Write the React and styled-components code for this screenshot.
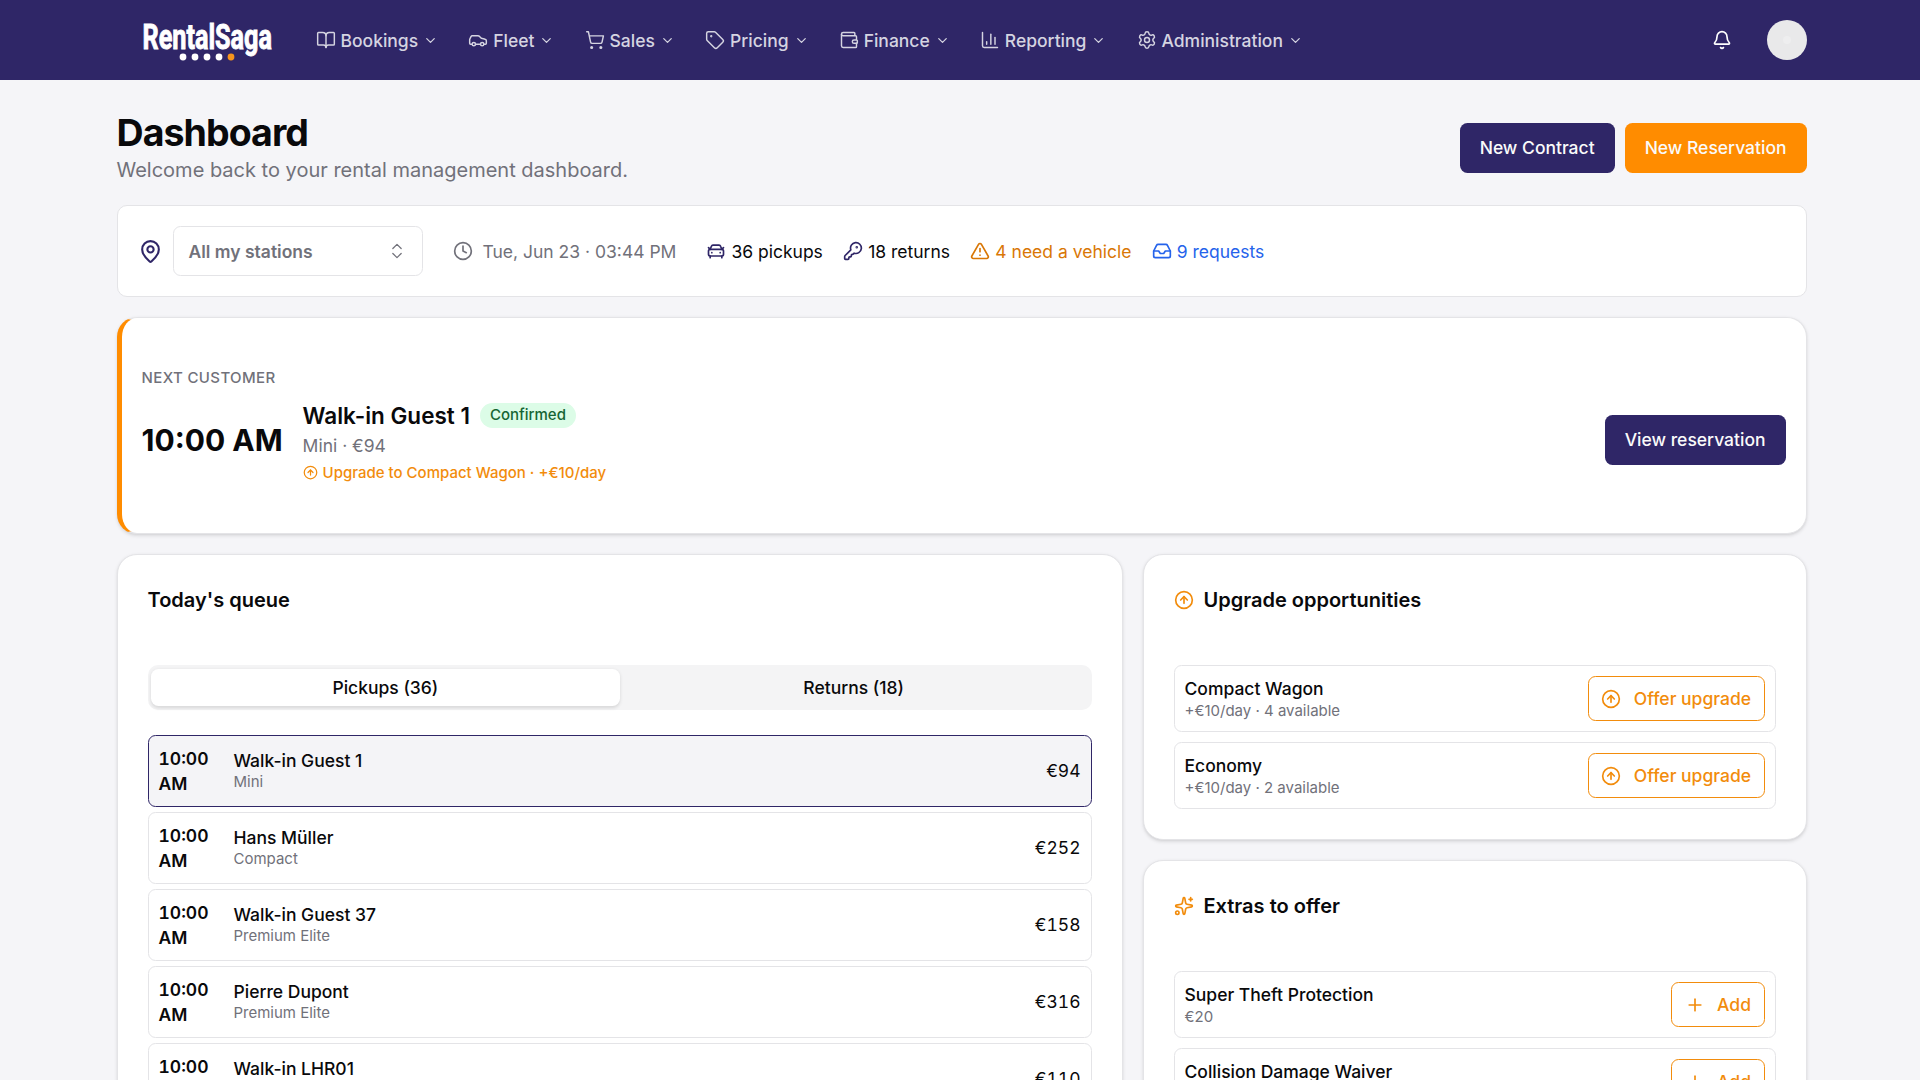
import React, { useState } from 'react'
import styled, { createGlobalStyle } from 'styled-components'
import {
  BookOpen, Car, ShoppingCart, Tag, Wallet, ChartColumn, Settings, ChevronDown, ChevronsUpDown,
  Bell, MapPin, Clock, CarFront, KeyRound, TriangleAlert, Inbox, CircleArrowUp, Sparkles, Plus
} from 'lucide-react'

const GlobalStyle = createGlobalStyle`
* {
  box-sizing: border-box;
  margin: 0;
  padding: 0;
}
body {
  background-color: #f5f5f8;
  color: #09090b;
  font-family: Inter, sans-serif;
  font-size: 17.5px;
  line-height: 25px;
}
button {
  font-family: inherit;
  cursor: pointer;
}
svg {
  flex-shrink: 0;
}
`

const Page = styled.div`
  height: 1080px;
  overflow: hidden;
`
const Header = styled.header`
  display: flex;
  align-items: center;
  height: 80px;
  padding: 0 113px 0 141.5px;
  background-color: #2f2667;
`
const Logo = styled.svg`
  width: 132px;
  height: 46px;
  margin-right: 42px;
  overflow: visible;
`
const Menu = styled.nav`
  display: flex;
  gap: 30.1px;
`
const MenuItem = styled.a`
  display: flex;
  align-items: center;
  gap: 5px;
  color: #d5d4e1;
  font-weight: 500;
`
const Account = styled.div`
  display: flex;
  align-items: center;
  gap: 35px;
  margin-left: auto;
  color: white;
`
const Avatar = styled.div`
  display: flex;
  align-items: center;
  justify-content: center;
  width: 40px;
  height: 40px;
  border-radius: 50%;
  background-color: #e9e9ea;
  &::after {
    content: '';
    width: 8px;
    height: 8px;
    border-radius: 50%;
    background-color: #eeeeef;
  }
`
const Main = styled.main`
  display: flex;
  flex-direction: column;
  gap: 20px;
  padding: 30px 113.5px 0 116.5px;
`
const Heading = styled.div`
  display: flex;
  align-items: center;
  justify-content: space-between;
`
const Title = styled.h1`
  font-size: 37.5px;
  line-height: 45px;
  font-weight: 700;
  letter-spacing: -0.025em;
`
const Welcome = styled.p`
  font-size: 20px;
  line-height: 30px;
  color: #71717a;
`
const Actions = styled.div`
  display: flex;
  gap: 10px;
`
const Button = styled.button`
  height: 50px;
  padding: 0 20px;
  border: none;
  border-radius: 7.5px;
  background-color: ${props => props.$accent ? '#ff8c00' : '#2f2667'};
  color: #fafafa;
  font-size: 17.5px;
  font-weight: 500;
`
const Filters = styled.section`
  display: flex;
  align-items: center;
  height: 92px;
  padding: 0 20px;
  border: 1px solid #e4e4e7;
  border-radius: 10px;
  background-color: white;
`
const Select = styled.button`
  display: flex;
  align-items: center;
  justify-content: space-between;
  width: 250px;
  height: 50px;
  margin: 0 30px 0 10px;
  padding: 0 15px;
  border: 1px solid #e4e4e7;
  border-radius: 7.5px;
  background-color: white;
  color: #71717a;
  font-size: 17.5px;
  font-weight: 600;
`
const Today = styled.div`
  display: flex;
  align-items: center;
  gap: 10px;
  margin-right: 30px;
  color: #71717a;
`
const Stats = styled.div`
  display: flex;
  gap: 20.3px;
`
const Stat = styled.div`
  display: flex;
  align-items: center;
  gap: 5px;
  color: ${props => props.$color || '#09090b'};
  svg {
    color: ${props => props.$color || '#2f2667'};
  }
`
const Card = styled.section`
  padding: 30px;
  border: 1px solid #e4e4e7;
  border-radius: 20px;
  background-color: white;
  box-shadow: 0 1.25px 3.75px rgba(0, 0, 0, 0.1), 0 1.25px 2.5px -1.25px rgba(0, 0, 0, 0.1);
`
const NextCard = styled(Card)`
  padding: 50px 20px 50.5px;
  border-left: 5px solid #ff8c00;
`
const Label = styled.p`
  margin-bottom: 9.25px;
  color: #71717a;
  font-size: 15px;
  line-height: 20px;
  font-weight: 500;
  letter-spacing: 0.025em;
  text-transform: uppercase;
`
const NextRow = styled.div`
  display: flex;
  align-items: center;
  gap: 20px;
  button {
    margin-left: auto;
  }
`
const NextTime = styled.p`
  font-size: 30px;
  line-height: 40px;
  font-weight: 700;
`
const NextInfo = styled.div`
  padding-top: 0.25px;
`
const NextName = styled.div`
  display: flex;
  align-items: center;
  gap: 10px;
  font-size: 22.5px;
  line-height: 35px;
  font-weight: 600;
`
const Badge = styled.span`
  padding: 2.5px 10px;
  border-radius: 13px;
  background-color: #dcfce7;
  color: #166534;
  font-size: 15px;
  line-height: 20px;
  font-weight: 500;
`
const NextDetail = styled.p`
  color: #71717a;
`
const Hint = styled.p`
  display: flex;
  align-items: center;
  gap: 5px;
  margin-top: 5px;
  color: #f28c0c;
  font-size: 15px;
  line-height: 20px;
  font-weight: 500;
`
const Columns = styled.div`
  display: grid;
  grid-template-columns: 1006px 664px;
  align-items: start;
  gap: 20px;
`
const Side = styled.div`
  display: grid;
  gap: 20px;
`
const CardTitle = styled.h2`
  display: flex;
  align-items: center;
  gap: 10px;
  margin-bottom: 50px;
  font-size: 20px;
  line-height: 30px;
  font-weight: 600;
  svg {
    color: #f28c0c;
  }
`
const Tabs = styled.div`
  display: flex;
  height: 45px;
  margin-bottom: 25px;
  padding: 3.75px;
  border-radius: 10px;
  background-color: #f4f4f5;
`
const Tab = styled.button`
  flex: 1;
  border: none;
  border-radius: 7.5px;
  background-color: ${props => props.$active ? 'white' : 'transparent'};
  box-shadow: ${props => props.$active ? '0 1.25px 3.75px rgba(0, 0, 0, 0.12)' : 'none'};
  color: #09090b;
  font-size: 17.5px;
  font-weight: 500;
`
const List = styled.div`
  display: grid;
  gap: ${props => props.$gap};
`
const Row = styled.div`
  display: flex;
  align-items: center;
  gap: 15px;
  padding: 10px;
  border: 1px solid ${props => props.$active ? '#2f2667' : '#e4e4e7'};
  border-radius: 7.5px;
  background-color: ${props => props.$active ? '#f4f4f7' : 'white'};
`
const Time = styled.span`
  width: 60px;
  font-weight: 600;
  font-variant-numeric: tabular-nums;
`
const Info = styled.div`
  flex: 1;
  line-height: ${props => props.$tight ? '21.9px' : '25px'};
  font-weight: 500;
  small {
    display: block;
    color: #71717a;
    font-size: 15px;
    line-height: 20px;
    font-weight: 400;
  }
`
const Price = styled.span`
  padding-bottom: 1.5px;
  font-variant-numeric: tabular-nums;
`
const OutlineButton = styled.button`
  display: flex;
  align-items: center;
  gap: 12.5px;
  height: 45px;
  padding: 0 12.5px;
  border: 1px solid #f28c0c;
  border-radius: 7.5px;
  background-color: white;
  color: #f28c0c;
  font-size: 17.5px;
  font-weight: 500;
`

const menu = [
  { name: 'Bookings', Icon: BookOpen },
  { name: 'Fleet', Icon: Car },
  { name: 'Sales', Icon: ShoppingCart },
  { name: 'Pricing', Icon: Tag },
  { name: 'Finance', Icon: Wallet },
  { name: 'Reporting', Icon: ChartColumn },
  { name: 'Administration', Icon: Settings }
]

const pickups = [
  { name: 'Walk-in Guest 1', group: 'Mini', price: '€94' },
  { name: 'Hans Müller', group: 'Compact', price: '€252' },
  { name: 'Walk-in Guest 37', group: 'Premium Elite', price: '€158' },
  { name: 'Pierre Dupont', group: 'Premium Elite', price: '€316' },
  { name: 'Walk-in LHR01', group: 'Mini', price: '€110' }
]

const upgrades = [
  { name: 'Compact Wagon', detail: '+€10/day · 4 available' },
  { name: 'Economy', detail: '+€10/day · 2 available' }
]

const extras = [
  { name: 'Super Theft Protection', detail: '€20' },
  { name: 'Collision Damage Waiver', detail: '€15' }
]

export default function App() {
  const [tab, setTab] = useState('pickups')

  return (
    <Page>
      <GlobalStyle />
      <Header>
        <Logo viewBox="0 0 132 46">
          <text x="0.5" y="32" textLength="129.5" lengthAdjust="spacingAndGlyphs" fill="white" stroke="white" strokeWidth="0.9" fontFamily="Roboto" fontWeight="700" fontSize="35">RentalSaga</text>
          {[41, 53, 65, 77].map(x => <circle key={x} cx={x} cy="40" r="3.4" fill="white" />)}
          <circle cx="89" cy="40" r="3.4" fill="#f7941d" />
        </Logo>
        <Menu>
          {menu.map(({ name, Icon }) => (
            <MenuItem key={name}>
              <Icon size={20} strokeWidth={1.75} />{name}<ChevronDown size={15} />
            </MenuItem>
          ))}
        </Menu>
        <Account>
          <Bell size={20} />
          <Avatar />
        </Account>
      </Header>
      <Main>
        <Heading>
          <div>
            <Title>Dashboard</Title>
            <Welcome>Welcome back to your rental management dashboard.</Welcome>
          </div>
          <Actions>
            <Button>New Contract</Button>
            <Button $accent>New Reservation</Button>
          </Actions>
        </Heading>
        <Filters>
          <MapPin size={25} color="#2f2667" />
          <Select>All my stations <ChevronsUpDown size={20} strokeWidth={1.5} /></Select>
          <Today><Clock size={20} /> Tue, Jun 23 · 03:44 PM</Today>
          <Stats>
            <Stat><CarFront size={20} />36 pickups</Stat>
            <Stat><KeyRound size={20} />18 returns</Stat>
            <Stat $color="#d97706"><TriangleAlert size={20} />4 need a vehicle</Stat>
            <Stat $color="#2563eb"><Inbox size={20} />9 requests</Stat>
          </Stats>
        </Filters>
        <NextCard>
          <Label>Next customer</Label>
          <NextRow>
            <NextTime>10:00 AM</NextTime>
            <NextInfo>
              <NextName>Walk-in Guest 1 <Badge>Confirmed</Badge></NextName>
              <NextDetail>Mini · €94</NextDetail>
              <Hint><CircleArrowUp size={15} />Upgrade to Compact Wagon · +€10/day</Hint>
            </NextInfo>
            <Button>View reservation</Button>
          </NextRow>
        </NextCard>
        <Columns>
          <Card>
            <CardTitle>Today's queue</CardTitle>
            <Tabs>
              <Tab $active={tab === 'pickups'} onClick={() => setTab('pickups')}>Pickups (36)</Tab>
              <Tab $active={tab === 'returns'} onClick={() => setTab('returns')}>Returns (18)</Tab>
            </Tabs>
            <List $gap="5px">
              {pickups.map((item, index) => (
                <Row key={item.name} $active={index === 0}>
                  <Time>10:00 AM</Time>
                  <Info $tight>{item.name}<small>{item.group}</small></Info>
                  <Price>{item.price}</Price>
                </Row>
              ))}
            </List>
          </Card>
          <Side>
            <Card>
              <CardTitle><CircleArrowUp size={20} />Upgrade opportunities</CardTitle>
              <List $gap="10px">
                {upgrades.map(item => (
                  <Row key={item.name}>
                    <Info>{item.name}<small>{item.detail}</small></Info>
                    <OutlineButton><CircleArrowUp size={20} />Offer upgrade</OutlineButton>
                  </Row>
                ))}
              </List>
            </Card>
            <Card>
              <CardTitle><Sparkles size={20} />Extras to offer</CardTitle>
              <List $gap="10px">
                {extras.map(item => (
                  <Row key={item.name}>
                    <Info>{item.name}<small>{item.detail}</small></Info>
                    <OutlineButton><Plus size={20} />Add</OutlineButton>
                  </Row>
                ))}
              </List>
            </Card>
          </Side>
        </Columns>
      </Main>
    </Page>
  )
}
